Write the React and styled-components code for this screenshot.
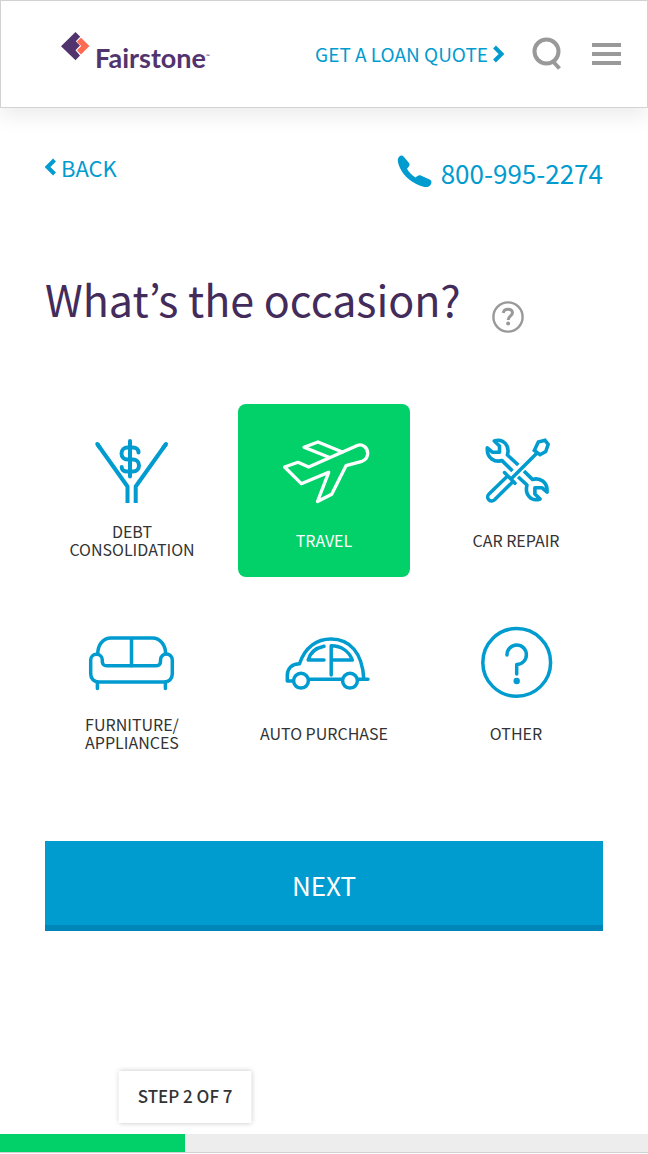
import React, { useState } from "react";
import styled, { createGlobalStyle, css } from "styled-components";

const blue = "#009bcf";
const green = "#02d069";
const purple = "#432c5b";
const grey = "#999999";
const ink = "#333333";

const GlobalStyle = createGlobalStyle`
  *, *::before, *::after { box-sizing: border-box; }
  body {
    margin: 0;
    background: #ffffff;
    color: ${ink};
    font-family: "Noto Sans CJK KR", "Noto Sans", sans-serif;
  }
`;

const Page = styled.div`
  display: flex;
  flex-direction: column;
  min-height: 100vh;
`;

const Header = styled.header`
  display: flex;
  align-items: center;
  height: 108px;
  padding: 0 26px 0 60px;
  border: 1px solid #d2d2d2;
  background: #ffffff;
  box-shadow: 0 8px 20px rgba(0, 0, 0, 0.08);
`;

const Logo = styled.a`
  display: flex;
  align-items: flex-start;
  gap: 4px;
  color: #51346e;
  text-decoration: none;
`;

const LogoMark = styled.svg`
  width: 30px;
  height: 30px;
`;

const LogoText = styled.span`
  padding-top: 8px;
  font-family: Lato, sans-serif;
  font-size: 27px;
  font-weight: 700;
  line-height: 36px;
`;

const TradeMark = styled.sup`
  font-size: 5px;
  line-height: 5px;
  vertical-align: 10px;
`;

const HeaderActions = styled.nav`
  display: flex;
  align-items: center;
  margin-left: auto;
`;

const QuoteLink = styled.a`
  display: flex;
  align-items: center;
  gap: 5px;
  margin-right: 28px;
  color: ${blue};
  font-size: 19px;
  line-height: 28px;
  text-decoration: none;
  white-space: nowrap;
`;

const IconButton = styled.button`
  display: flex;
  padding: 0;
  border: 0;
  background: none;
  color: ${grey};
  cursor: pointer;

  & + & { margin-left: 30px; }
`;

const LineIcon = styled.svg`
  flex: none;
  display: block;
  width: ${(p) => p.$w}px;
  height: ${(p) => p.$h}px;
  overflow: visible;
  fill: none;
  stroke: currentColor;
  stroke-width: ${(p) => p.$stroke || 4};
`;

const Main = styled.main`
  padding: 46px 45px 0;
`;

const Toolbar = styled.div`
  display: flex;
  justify-content: space-between;
  align-items: flex-start;
`;

const BackLink = styled.a`
  display: flex;
  align-items: center;
  gap: 5px;
  color: ${blue};
  font-size: 22px;
  line-height: 26px;
  text-decoration: none;
`;

const PhoneLink = styled.a`
  display: flex;
  align-items: flex-start;
  gap: 9px;
  color: ${blue};
  font-size: 26px;
  line-height: 38px;
  text-decoration: none;
`;

const PhoneGlyph = styled.svg`
  width: 35px;
  height: 34px;
  fill: currentColor;
`;

const TitleRow = styled.div`
  display: flex;
  align-items: flex-end;
  gap: 31px;
  margin-top: 76px;
`;

const Title = styled.h1`
  margin: 0;
  padding-bottom: 5px;
  color: ${purple};
  font-size: 43px;
  font-weight: 400;
  line-height: 60px;
`;

const Choices = styled.fieldset`
  display: grid;
  grid-template-columns: repeat(3, 1fr);
  gap: 20px;
  margin: 71px 0 0;
  padding: 0 1px;
  border: 0;
`;

const Choice = styled.label`
  display: flex;
  flex-direction: column;
  align-items: center;
  height: 173px;
  padding-top: 30px;
  border-radius: 8px;
  color: ${blue};
  cursor: pointer;

  ${(p) => p.$selected && css`
    background: ${green};
    color: #ffffff;
  `}
`;

const HiddenRadio = styled.input`
  position: absolute;
  opacity: 0;
  pointer-events: none;
`;

const ChoiceLabel = styled.span`
  display: flex;
  align-items: center;
  min-height: 36px;
  margin-top: 16px;
  color: ${(p) => (p.$selected ? "#ffffff" : ink)};
  font-size: 16px;
  line-height: 18px;
  text-align: center;
  white-space: pre-line;
`;

const NextButton = styled.button`
  display: block;
  width: 100%;
  height: 90px;
  margin-top: 71px;
  padding: 2px 0 0;
  border: 0;
  border-bottom: 6px solid #0085b9;
  background: ${blue};
  color: #ffffff;
  font: inherit;
  font-size: 26px;
  cursor: pointer;
`;

const Footer = styled.footer`
  margin-top: auto;
  padding-bottom: 1px;
`;

const StepBadge = styled.div`
  width: max-content;
  margin: 0 0 11px ${(p) => p.$at}%;
  padding: 11px 19px 13px;
  background: #ffffff;
  box-shadow: 0 0 5px rgba(0, 0, 0, 0.24);
  font-size: 17px;
  font-weight: 500;
  line-height: 28px;
  transform: translateX(-50%);
`;

const Track = styled.div`
  height: 19px;
  border-bottom: 1px solid #d2d2d2;
  background: #ededed;
`;

const Bar = styled.div`
  width: ${(p) => p.$at}%;
  height: 18px;
  background: ${green};
`;

const Round = ({ children, stroke = 4 }) => (
  <LineIcon $w={88} $h={72} $stroke={stroke} viewBox="0 0 88 72" strokeLinecap="round" strokeLinejoin="round" aria-hidden="true">
    {children}
  </LineIcon>
);

const DebtIcon = () => (
  <LineIcon $w={88} $h={72} viewBox="0 0 88 72" strokeLinejoin="round" aria-hidden="true">
    <path d="M9.3 10 39.5 52.5V69M78 10 47.7 52.5V69" />
    <path strokeLinecap="round" d="M9.3 10 12 13.8M78 10 75.3 13.8M42 7V42.5M50.5 18.5C50.5 15.5 48 13.5 45 13.5H39.5a6 6 0 0 0 0 12H45a6 6 0 0 1 0 12H39C36 37.5 33.7 36 33.7 33" />
  </LineIcon>
);

const TravelIcon = () => (
  <Round stroke={3.3}>
    <path d="M4.6 33 18 28.3 28.7 33 77.3 11.5C82 9.5 87.7 13 87.7 19.3C87.7 23.5 85.5 26 82 27.3L66 31.7 51.7 60.3 37.5 67.5 48.7 38.3 21.3 49.7Z" />
    <path d="M49 23.3 24 13.3 38 8 62.3 18" />
  </Round>
);

const wrench = "M40.5 37 30 26.6C23 28.6 14.5 24.5 15.3 13.8L20.3 18.2H27.5V12L22.3 7C31.5 3.8 38 12 35.4 21L46.3 31";

const RepairIcon = () => (
  <Round stroke={3.6}>
    <path d={wrench} strokeLinecap="butt" />
    <path d={wrench} strokeLinecap="butt" transform="rotate(180 45.2 36)" />
    <path strokeWidth="7" stroke="#ffffff" d="M42 42 58 26" />
    <path d="M39 45 65.3 18.7M62.3 16.5 66.3 8 73 6.3 76.2 10.3 73.7 17.5 68 20.7ZM32.5 38.5 43 49.3M34.8 42.7 17 60A3.5 3.5 0 0 0 22.3 66L40.3 48.3" strokeWidth="3.5" strokeLinejoin="miter" />
  </Round>
);

const SofaIcon = () => (
  <Round stroke={3.5}>
    <path d="M9.7 27C9.7 18 15 11 23 11H64.5C72 11 77.7 18 77.7 27M43.5 11V38.7M9.4 55V61.5M77.4 55V61.5" />
    <path d="M2.7 33A5.8 5.8 0 0 1 14.3 33V34.5C14.3 37 16 38.8 18.5 38.8H68.5C71 38.8 72.5 37 72.5 34.5V33A5.9 5.9 0 0 1 84.3 33V47C84.3 51.5 81 55 76.5 55H10.7C6 55 2.7 51.5 2.7 47Z" />
  </Round>
);

const CarIcon = () => (
  <Round stroke={3.5}>
    <circle cx="21" cy="53.7" r="7.4" />
    <circle cx="70" cy="53.7" r="7.4" />
    <path d="M13 54H7.3V48.5C7.3 41 12 37 19.5 36.8C25 20 37 12 51 12C70 12 82.5 26 83.8 52M29.3 52.3H61.7M78.3 52.3H88" />
    <path d="M44 19.3C36 21 30 26 28.2 33H44M51.2 48V18.8C61 19 69 24 72.3 33H51.2" />
  </Round>
);

const OtherIcon = () => (
  <Round stroke={3.5}>
    <circle cx="44.7" cy="35.4" r="33.9" />
    <path d="M35 28A9.7 9.7 0 1 1 44.7 37.5V47" />
    <circle cx="44.7" cy="54" r="3.2" fill="currentColor" stroke="none" />
  </Round>
);

const options = [
  { id: "debt", label: "DEBT\nCONSOLIDATION", Icon: DebtIcon },
  { id: "travel", label: "TRAVEL", Icon: TravelIcon },
  { id: "repair", label: "CAR REPAIR", Icon: RepairIcon },
  { id: "furniture", label: "FURNITURE/\nAPPLIANCES", Icon: SofaIcon },
  { id: "auto", label: "AUTO PURCHASE", Icon: CarIcon },
  { id: "other", label: "OTHER", Icon: OtherIcon },
];

const step = 2;
const steps = 7;

export default function App() {
  const [selected, setSelected] = useState("travel");
  const progress = (step / steps) * 100;

  return (
    <Page>
      <GlobalStyle />
      <Header>
        <Logo href="#">
          <LogoMark viewBox="0 0 30 30" aria-hidden="true">
            <path fill="#51346e" d="M14.5 0 19.2 4.7 14.8 9.2 19 13.5 14.5 18.2 19 23.5 14.5 28.3 0 14.2Z" />
            <path fill="#ff6a52" d="M20 5.7 28.4 14 20 22.5 16 18.3 20.2 14 15.8 9.8Z" />
          </LogoMark>
          <LogoText>Fairstone<TradeMark>™</TradeMark></LogoText>
        </Logo>
        <HeaderActions>
          <QuoteLink href="#">
            GET A LOAN QUOTE
            <LineIcon $w={11} $h={16} viewBox="0 0 11 16" aria-hidden="true">
              <path d="M1.5 1 8.5 8 1.5 15" />
            </LineIcon>
          </QuoteLink>
          <IconButton type="button" aria-label="Search">
            <LineIcon $w={30} $h={32} viewBox="0 0 30 32" aria-hidden="true">
              <circle cx="14.5" cy="13.5" r="12" />
              <path d="M21 23.5 27.5 30.5" />
            </LineIcon>
          </IconButton>
          <IconButton type="button" aria-label="Menu">
            <LineIcon $w={29} $h={22} viewBox="0 0 29 22" aria-hidden="true">
              <path d="M0 2H29M0 11H29M0 20H29" />
            </LineIcon>
          </IconButton>
        </HeaderActions>
      </Header>

      <Main>
        <Toolbar>
          <BackLink href="#">
            <LineIcon $w={11} $h={16} viewBox="0 0 11 16" aria-hidden="true">
              <path d="M9.5 1 2.5 8 9.5 15" />
            </LineIcon>
            BACK
          </BackLink>
          <PhoneLink href="tel:800-995-2274">
            <PhoneGlyph viewBox="0 0 35 34" aria-hidden="true">
              <path d="M1.2 4.2C2.7 1.2 5 .8 7 3L12 9C13.3 11 12.4 11.8 10 14.8C12.2 18.7 15 21.5 18.5 23.6C20.2 22 22 20.6 24.3 21.8L32.6 25.6C35 26.8 34.7 28.8 33.8 30.4C31.5 34 27.5 33.5 22 31.2C12 27 4.5 19.5 1.6 10.5C.9 8 .4 6.2 1.2 4.2Z" />
            </PhoneGlyph>
            800-995-2274
          </PhoneLink>
        </Toolbar>

        <TitleRow>
          <Title>What’s the occasion?</Title>
          <IconButton type="button" aria-label="Help">
            <LineIcon $w={32} $h={32} $stroke={3} viewBox="0 0 32 32" aria-hidden="true">
              <circle cx="16" cy="16" r="14.6" strokeWidth="2.4" />
              <path d="M11.3 12C11.8 6.8 20.5 7 20.5 11.8C20.5 15 16.2 14.8 16.2 19" />
              <circle cx="16.1" cy="22.4" r="2" fill="currentColor" stroke="none" />
            </LineIcon>
          </IconButton>
        </TitleRow>

        <Choices aria-label="What’s the occasion?">
          {options.map(({ id, label, Icon }) => (
            <Choice key={id} $selected={id === selected}>
              <HiddenRadio
                type="radio"
                name="occasion"
                value={id}
                checked={id === selected}
                onChange={() => setSelected(id)}
              />
              <Icon />
              <ChoiceLabel $selected={id === selected}>{label}</ChoiceLabel>
            </Choice>
          ))}
        </Choices>

        <NextButton type="button">NEXT</NextButton>
      </Main>

      <Footer>
        <StepBadge $at={progress}>STEP 2 OF 7</StepBadge>
        <Track role="progressbar" aria-label="Progress" aria-valuenow={step} aria-valuemin={0} aria-valuemax={steps}>
          <Bar $at={progress} />
        </Track>
      </Footer>
    </Page>
  );
}
